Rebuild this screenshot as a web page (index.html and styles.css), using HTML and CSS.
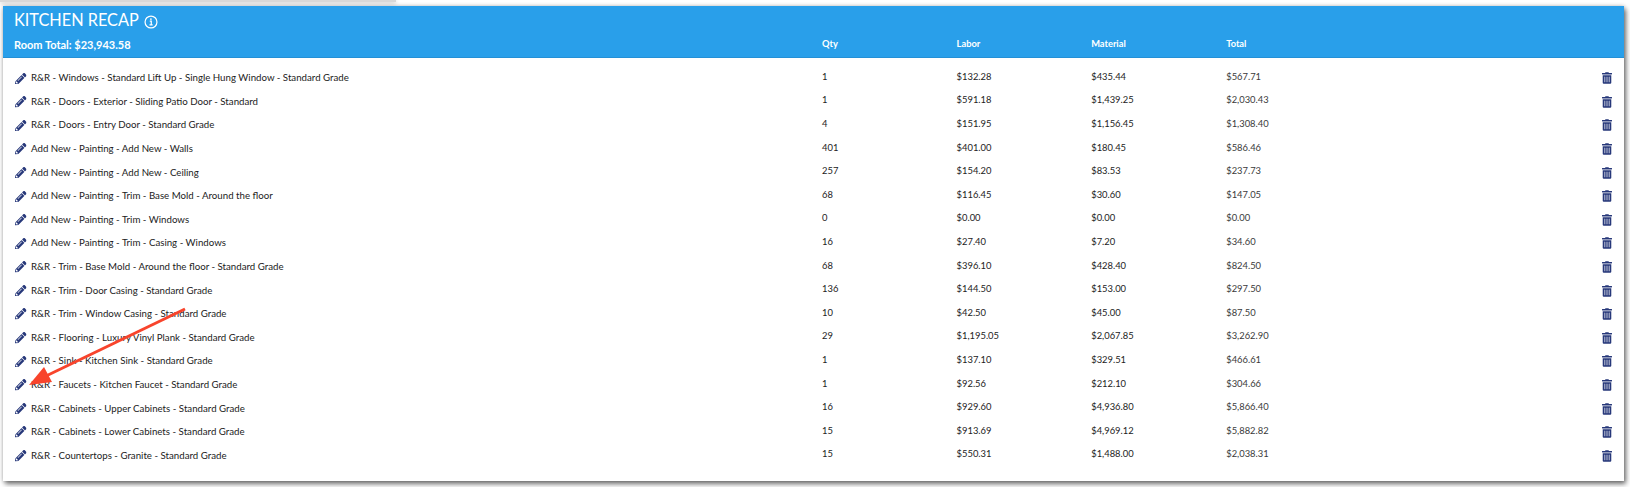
FILE: index.html
```html
<!DOCTYPE html>
<html lang="en">
<head>
    <meta charset="UTF-8">
    <title>Kitchen Recap</title>
    <link rel="stylesheet" href="styles.css">
</head>
<body>
    <svg width="0" height="0" class="defs">
        <symbol id="pencil" viewBox="0 0 512 512"><path d="M497.9 142.1l-46.1 46.1c-4.7 4.7-12.3 4.7-17 0l-111-111c-4.7-4.7-4.7-12.3 0-17l46.1-46.1c18.7-18.7 49.1-18.7 67.9 0l60.1 60.1c18.8 18.7 18.8 49.1 0 67.9zM284.2 99.8L21.6 362.4.4 483.9c-2.9 16.4 11.4 30.6 27.8 27.8l121.5-21.3 262.6-262.6c4.7-4.7 4.7-12.3 0-17l-111-111c-4.8-4.7-12.4-4.7-17.1 0zM124.1 339.9c-5.5-5.5-5.5-14.3 0-19.8l154-154c5.5-5.5 14.3-5.5 19.8 0s5.5 14.3 0 19.8l-154 154c-5.5 5.5-14.3 5.5-19.8 0zM88 424h48v36.3l-64.5 11.3-31.1-31.1L51.7 376H88v48z"/></symbol>
        <symbol id="trash" viewBox="0 0 448 512"><path d="M32 464a48 48 0 0 0 48 48h288a48 48 0 0 0 48-48V128H32zm272-256a16 16 0 0 1 32 0v224a16 16 0 0 1-32 0zm-96 0a16 16 0 0 1 32 0v224a16 16 0 0 1-32 0zm-96 0a16 16 0 0 1 32 0v224a16 16 0 0 1-32 0zM432 32H312l-9.4-18.7A24 24 0 0 0 281.1 0H166.8a23.72 23.72 0 0 0-21.4 13.3L136 32H16A16 16 0 0 0 0 48v32a16 16 0 0 0 16 16h416a16 16 0 0 0 16-16V48a16 16 0 0 0-16-16z"/></symbol>
    </svg>

    <div class="shelf"></div>

    <div class="card">
        <div class="card-header">
            <div class="title-col">
                <h1 class="title">KITCHEN RECAP
                    <svg class="info" viewBox="0 0 16 16"><circle cx="8" cy="8" r="6.8"/><path d="M6.6 7h1.7v4.2M6.3 11.4h3.6"/><circle class="dot" cx="7.9" cy="4.7" r="1"/></svg>
                </h1>
                <div class="room-total">Room Total: $23,943.58</div>
            </div>
            <div class="head-cell">Qty</div>
            <div class="head-cell">Labor</div>
            <div class="head-cell">Material</div>
            <div class="head-cell">Total</div>
        </div>

        <div class="rows" id="rows"></div>
    </div>

    <svg class="arrow" viewBox="0 0 200 100" width="200" height="100">
        <path d="M185 10 L46 77" class="arrow-line"/>
        <path d="M29 86 L44 68 L52 83 Z" class="arrow-head"/>
    </svg>

    <script>
        const items = [
            ['R&R - Windows - Standard Lift Up - Single Hung Window - Standard Grade', '1', '$132.28', '$435.44', '$567.71'],
            ['R&R - Doors - Exterior - Sliding Patio Door - Standard', '1', '$591.18', '$1,439.25', '$2,030.43'],
            ['R&R - Doors - Entry Door - Standard Grade', '4', '$151.95', '$1,156.45', '$1,308.40'],
            ['Add New - Painting - Add New - Walls', '401', '$401.00', '$180.45', '$586.46'],
            ['Add New - Painting - Add New - Ceiling', '257', '$154.20', '$83.53', '$237.73'],
            ['Add New - Painting - Trim - Base Mold - Around the floor', '68', '$116.45', '$30.60', '$147.05'],
            ['Add New - Painting - Trim - Windows', '0', '$0.00', '$0.00', '$0.00'],
            ['Add New - Painting - Trim - Casing - Windows', '16', '$27.40', '$7.20', '$34.60'],
            ['R&R - Trim - Base Mold - Around the floor - Standard Grade', '68', '$396.10', '$428.40', '$824.50'],
            ['R&R - Trim - Door Casing - Standard Grade', '136', '$144.50', '$153.00', '$297.50'],
            ['R&R - Trim - Window Casing - Standard Grade', '10', '$42.50', '$45.00', '$87.50'],
            ['R&R - Flooring - Luxury Vinyl Plank - Standard Grade', '29', '$1,195.05', '$2,067.85', '$3,262.90'],
            ['R&R - Sink - Kitchen Sink - Standard Grade', '1', '$137.10', '$329.51', '$466.61'],
            ['R&R - Faucets - Kitchen Faucet - Standard Grade', '1', '$92.56', '$212.10', '$304.66'],
            ['R&R - Cabinets - Upper Cabinets - Standard Grade', '16', '$929.60', '$4,936.80', '$5,866.40'],
            ['R&R - Cabinets - Lower Cabinets - Standard Grade', '15', '$913.69', '$4,969.12', '$5,882.82'],
            ['R&R - Countertops - Granite - Standard Grade', '15', '$550.31', '$1,488.00', '$2,038.31']
        ];

        const rows = document.getElementById('rows');

        items.forEach(item => {
            const row = document.createElement('div');
            row.className = 'row';

            const name = document.createElement('div');
            name.className = 'name';
            name.innerHTML = '<svg class="pencil"><use href="#pencil"/></svg>';
            name.append(item[0]);
            row.append(name);

            item.slice(1).forEach((value, i) => {
                const cell = document.createElement('div');
                cell.className = i === 3 ? 'num total' : 'num';
                cell.textContent = value;
                row.append(cell);
            });

            const del = document.createElement('div');
            del.className = 'del';
            del.innerHTML = '<svg class="trash"><use href="#trash"/></svg>';
            row.append(del);

            rows.append(row);
        });
    </script>
</body>
</html>
```

FILE: styles.css
```css
* {
    margin: 0;
    padding: 0;
    box-sizing: border-box;
}

body {
    width: 1630px;
    height: 487px;
    overflow: hidden;
    background: #fff;
    font-family: "Lato", "Noto Sans", sans-serif;
    position: relative;
}

.defs {
    position: absolute;
}

/* strip of the panel above, only its shadow is left */
.shelf {
    width: 396px;
    height: 2px;
    background: #d8d8d8;
    box-shadow: 0 1px 4px rgba(0, 0, 0, 0.3);
}

.card {
    position: relative;
    width: 1621px;
    height: 475px;
    margin: 4px 0 0 3px;
    background: #fff;
    box-shadow: 2px 3px 5px rgba(0, 0, 0, 0.55), 0 0 4px rgba(0, 0, 0, 0.2);
}

.card-header {
    display: grid;
    grid-template-columns: 819px 134.6px 134.6px 135px 1fr;
    height: 52px;
    background: #299fea;
    border-bottom: 1px solid #2490d6;
    color: #fff;
}

.title-col {
    padding: 4px 0 0 11px;
}

.title {
    display: flex;
    align-items: center;
    font-size: 16.3px;
    font-weight: 400;
    line-height: 20px;
}

.info {
    width: 14px;
    height: 14px;
    margin: 3px 0 0 5px;
    fill: none;
    stroke: #fff;
    stroke-width: 1.4;
}

.info .dot {
    fill: #fff;
    stroke: none;
}

.room-total {
    margin-top: 8px;
    font-size: 11px;
    font-weight: 700;
    line-height: 14px;
}

.head-cell {
    padding-top: 32px;
    font-size: 9.3px;
    font-weight: 700;
    line-height: 12px;
}

.rows {
    padding-top: 7.5px;
}

.row {
    display: grid;
    grid-template-columns: 819px 134.6px 134.6px 135px 1fr 36px;
    align-items: center;
    height: 23.6px;
    font-size: 9.7px;
    color: #222;
}

.name {
    display: flex;
    align-items: center;
    padding-left: 12px;
}

.num {
    padding-bottom: 2px;
    font-size: 9.4px;
}

.total {
    color: #3a3a3a;
}

.pencil {
    width: 11.5px;
    height: 11.5px;
    margin: 2px 4.5px 0 0;
    fill: #27387a;
}

.del {
    display: flex;
    padding: 2px 0 0 14px;
}

.trash {
    width: 10px;
    height: 12px;
    fill: #27387a;
}

/* annotation drawn over the table */
.arrow {
    position: absolute;
    left: 0;
    top: 299px;
}

.arrow-line {
    fill: none;
    stroke: #f8442c;
    stroke-width: 3;
}

.arrow-head {
    fill: #f8442c;
}
```
